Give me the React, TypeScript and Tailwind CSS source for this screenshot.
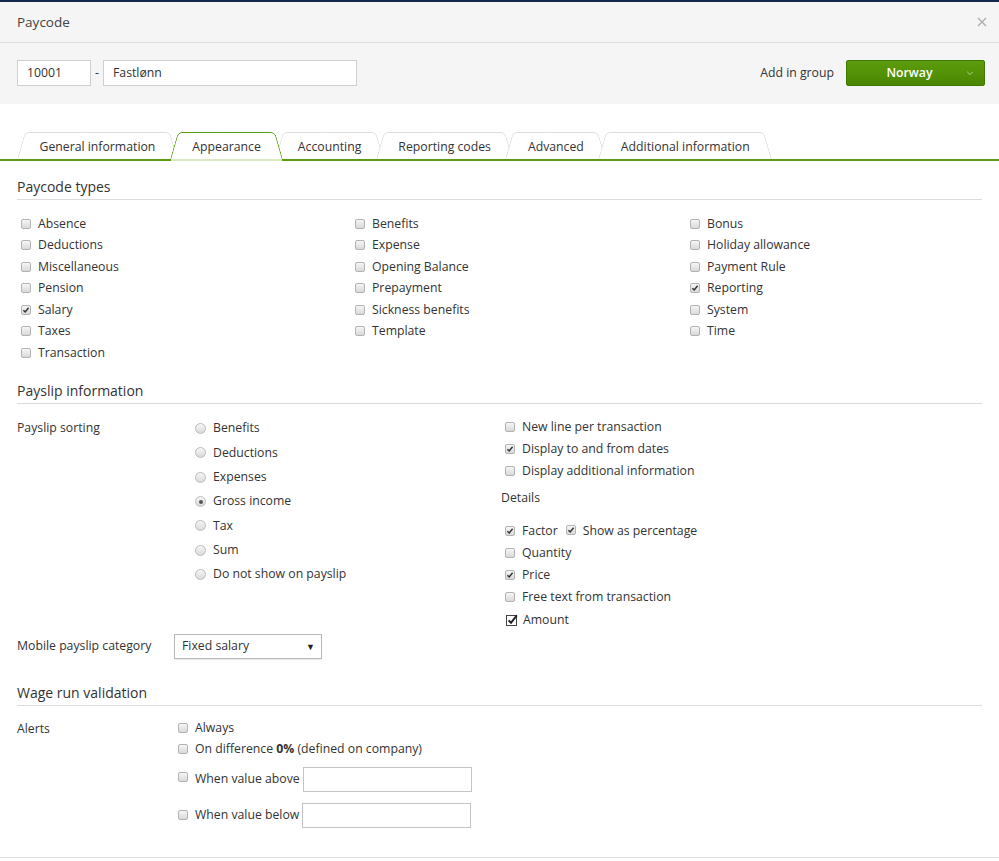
import * as React from 'react'

// Paycode dialog, "Appearance" tab.

function Box({ checked }: { checked?: boolean }) {
  return (
    <span className="relative inline-block h-[10px] w-[10px] shrink-0 rounded-[2px] border border-[#b3b3b3] bg-linear-to-b from-[#f6f6f6] to-[#d9d9d9]">
      {checked && (
        <svg viewBox="0 0 10 10" className="absolute -left-px -top-px h-[10px] w-[10px]">
          <path d="M2.4 5.2 L4.2 7 L7.6 2.8" fill="none" stroke="#333" strokeWidth="1.5" />
        </svg>
      )}
    </span>
  )
}

function BigBox() {
  // the "Amount" one renders differently (native style box)
  return (
    <svg viewBox="0 0 14 14" className="h-[14px] w-[14px] shrink-0">
      <rect x="1.5" y="2.5" width="10" height="10" fill="#fff" stroke="#444" strokeWidth="1" />
      <path d="M3.6 7.4 L6 9.8 L11.8 2.4" fill="none" stroke="#222" strokeWidth="2" />
    </svg>
  )
}

function Radio({ checked }: { checked?: boolean }) {
  return (
    <span className="relative inline-flex h-[11px] w-[11px] shrink-0 items-center justify-center rounded-full border border-[#bdbdbd] bg-linear-to-b from-[#f6f6f6] to-[#dadada]">
      {checked && <span className="h-[4px] w-[4px] rounded-full bg-[#555]" />}
    </span>
  )
}

function Check({ label, checked, h = 'h-[21.5px]' }: { label: React.ReactNode; checked?: boolean; h?: string }) {
  return (
    <div className={'flex items-center gap-[7px] pl-[4px] ' + h}>
      <Box checked={checked} />
      <span>{label}</span>
    </div>
  )
}

function SectionTitle({ children, className }: { children: React.ReactNode; className?: string }) {
  return (
    <div className={'border-b border-[#dcdcdc] pb-[2px] text-[14px] leading-[20px] text-[#333] ' + (className ?? '')}>
      {children}
    </div>
  )
}

const tabs = [
  'General information',
  'Appearance',
  'Accounting',
  'Reporting codes',
  'Advanced',
  'Additional information',
]

function Tab({ label, active }: { label: string; active?: boolean }) {
  const border = active ? 'border-[#5c9c12]' : 'border-[#dedede]'
  const w = active ? 'border-t-[1.5px]' : 'border-t'
  return (
    <div className={'relative flex h-[27px] items-center px-[18.5px] pt-[3px] ' + (active ? 'z-10' : '')}>
      <span
        className={
          'absolute bottom-0 left-0 top-0 w-[55%] -skew-x-[16deg] rounded-tl-[5px] bg-white ' +
          w + ' ' + (active ? 'border-l-[1.5px] ' : 'border-l ') + border
        }
      />
      <span
        className={
          'absolute bottom-0 right-0 top-0 w-[55%] skew-x-[16deg] rounded-tr-[5px] bg-white ' +
          w + ' ' + (active ? 'border-r-[1.5px] ' : 'border-r ') + border
        }
      />
      {active && <span className="absolute -bottom-[2px] left-[-3px] right-[-3px] h-[2px] bg-[#dbe9c8]" />}
      <span className="relative text-[#333]">{label}</span>
    </div>
  )
}

export default function App() {
  return (
    <div className="min-h-[861px] w-full bg-white font-['Open_Sans',sans-serif] text-[12.25px] text-[#333]">
      <div className="h-[2px] bg-[#13294b]" />

      {/* header */}
      <div className="flex h-[41px] items-center justify-between border-b border-[#dedede] bg-[#f5f5f5] pl-[17px] pr-[12px]">
        <span className="text-[13.5px] text-[#444]">Paycode</span>
        <svg viewBox="0 0 10 10" className="h-[10px] w-[10px]">
          <path d="M1 1 L9 9 M9 1 L1 9" stroke="#aaa" strokeWidth="1.2" />
        </svg>
      </div>

      <div className="flex items-center justify-between bg-[#f5f5f5] pb-[18px] pl-[17px] pr-[14px] pt-[17px]">
        <div className="flex items-center">
          <div className="flex h-[26px] w-[74px] items-center border border-[#cfcfcf] bg-white px-[9px]">10001</div>
          <span className="w-[12px] text-center">-</span>
          <div className="flex h-[26px] w-[254px] items-center border border-[#cfcfcf] bg-white px-[9px]">Fastlønn</div>
        </div>
        <div className="flex items-center gap-[12px]">
          <span>Add in group</span>
          <div className="flex h-[26px] w-[139px] items-center rounded-[2px] border border-[#3f7a00] bg-linear-to-b from-[#5d9c0c] to-[#4a8702] text-white">
            <span className="flex-1 pl-[14px] text-center font-semibold">Norway</span>
            <svg viewBox="0 0 10 10" className="ml-[8px] mr-[10px] h-[8px] w-[8px]">
              <path d="M1.5 3.5 L5 7 L8.5 3.5" fill="none" stroke="#cfe3b4" strokeWidth="1" />
            </svg>
          </div>
        </div>
      </div>

      {/* tabs */}
      <div className="flex h-[57px] items-end border-b-2 border-[#5c9c12] pl-[21px]">
        {tabs.map((t) => (
          <Tab key={t} label={t} active={t === 'Appearance'} />
        ))}
      </div>

      <div className="px-[17px]">
        <SectionTitle className="mt-[16px]">Paycode types</SectionTitle>
        <div className="mt-[13px] grid grid-cols-[334px_335px_1fr]">
          <div>
            <Check label="Absence" />
            <Check label="Deductions" />
            <Check label="Miscellaneous" />
            <Check label="Pension" />
            <Check label="Salary" checked />
            <Check label="Taxes" />
            <Check label="Transaction" />
          </div>
          <div>
            <Check label="Benefits" />
            <Check label="Expense" />
            <Check label="Opening Balance" />
            <Check label="Prepayment" />
            <Check label="Sickness benefits" />
            <Check label="Template" />
          </div>
          <div>
            <Check label="Bonus" />
            <Check label="Holiday allowance" />
            <Check label="Payment Rule" />
            <Check label="Reporting" checked />
            <Check label="System" />
            <Check label="Time" />
          </div>
        </div>

        <SectionTitle className="mt-[17px]">Payslip information</SectionTitle>
        <div className="mt-[13px] flex">
          <div className="w-[157px] pt-[1px] leading-[20px]">Payslip sorting</div>
          <div className="w-[327px] pl-[21px]">
            {['Benefits', 'Deductions', 'Expenses', 'Gross income', 'Tax', 'Sum', 'Do not show on payslip'].map((r) => (
              <div key={r} className="flex h-[24.3px] items-center gap-[7px]">
                <Radio checked={r === 'Gross income'} />
                <span>{r}</span>
              </div>
            ))}
          </div>
          <div>
            <Check label="New line per transaction" h="h-[21.7px]" />
            <Check label="Display to and from dates" checked h="h-[21.7px]" />
            <Check label="Display additional information" h="h-[21.7px]" />
            <div className="mt-[6px] leading-[20px]">Details</div>
            <div className="mt-[13px] flex h-[21.8px] items-center gap-[7px] pl-[4px]">
              <Box checked />
              <span>Factor</span>
              <span className="ml-[1px]">
                <Box checked />
              </span>
              <span>Show as percentage</span>
            </div>
            <Check label="Quantity" h="h-[21.8px]" />
            <Check label="Price" checked h="h-[21.8px]" />
            <Check label="Free text from transaction" h="h-[21.8px]" />
            <div className="flex h-[23px] items-center gap-[4px] pl-[4px] pt-[1px]">
              <BigBox />
              <span>Amount</span>
            </div>
          </div>
        </div>

        <div className="mt-[3px] flex items-center">
          <div className="w-[157px]">Mobile payslip category</div>
          <div className="flex h-[25px] w-[148px] items-center justify-between border border-[#b9b9b9] bg-white pl-[7px] pr-[6px] shadow-[0_1px_1px_rgba(0,0,0,0.08)]">
            <span>Fixed salary</span>
            <span className="text-[9px] text-[#222]">▼</span>
          </div>
        </div>

        <SectionTitle className="mt-[24px]">Wage run validation</SectionTitle>
        <div className="mt-[12px] flex">
          <div className="w-[157px] leading-[21px]">Alerts</div>
          <div>
            <div className="flex h-[21px] items-center gap-[7px] pl-[4px]">
              <Box />
              <span>Always</span>
            </div>
            <div className="flex h-[21px] items-center gap-[7px] pl-[4px]">
              <Box />
              <span>
                On difference <b className="font-bold">0%</b> (defined on company)
              </span>
            </div>
            <div className="mt-[7px] flex h-[25px] items-center gap-[7px] pl-[4px]">
              <span className="-mt-[3px]">
                <Box />
              </span>
              <span>When value above</span>
              <div className="-ml-[4px] h-[25px] w-[169px] border border-[#c4c4c4] bg-white" />
            </div>
            <div className="mt-[11px] flex h-[25px] items-center gap-[7px] pl-[4px]">
              <Box />
              <span>When value below</span>
              <div className="-ml-[4px] h-[25px] w-[169px] border border-[#c4c4c4] bg-white" />
            </div>
          </div>
        </div>
      </div>

      <div className="mt-[29px] border-b border-[#dcdcdc]" />
    </div>
  )
}
